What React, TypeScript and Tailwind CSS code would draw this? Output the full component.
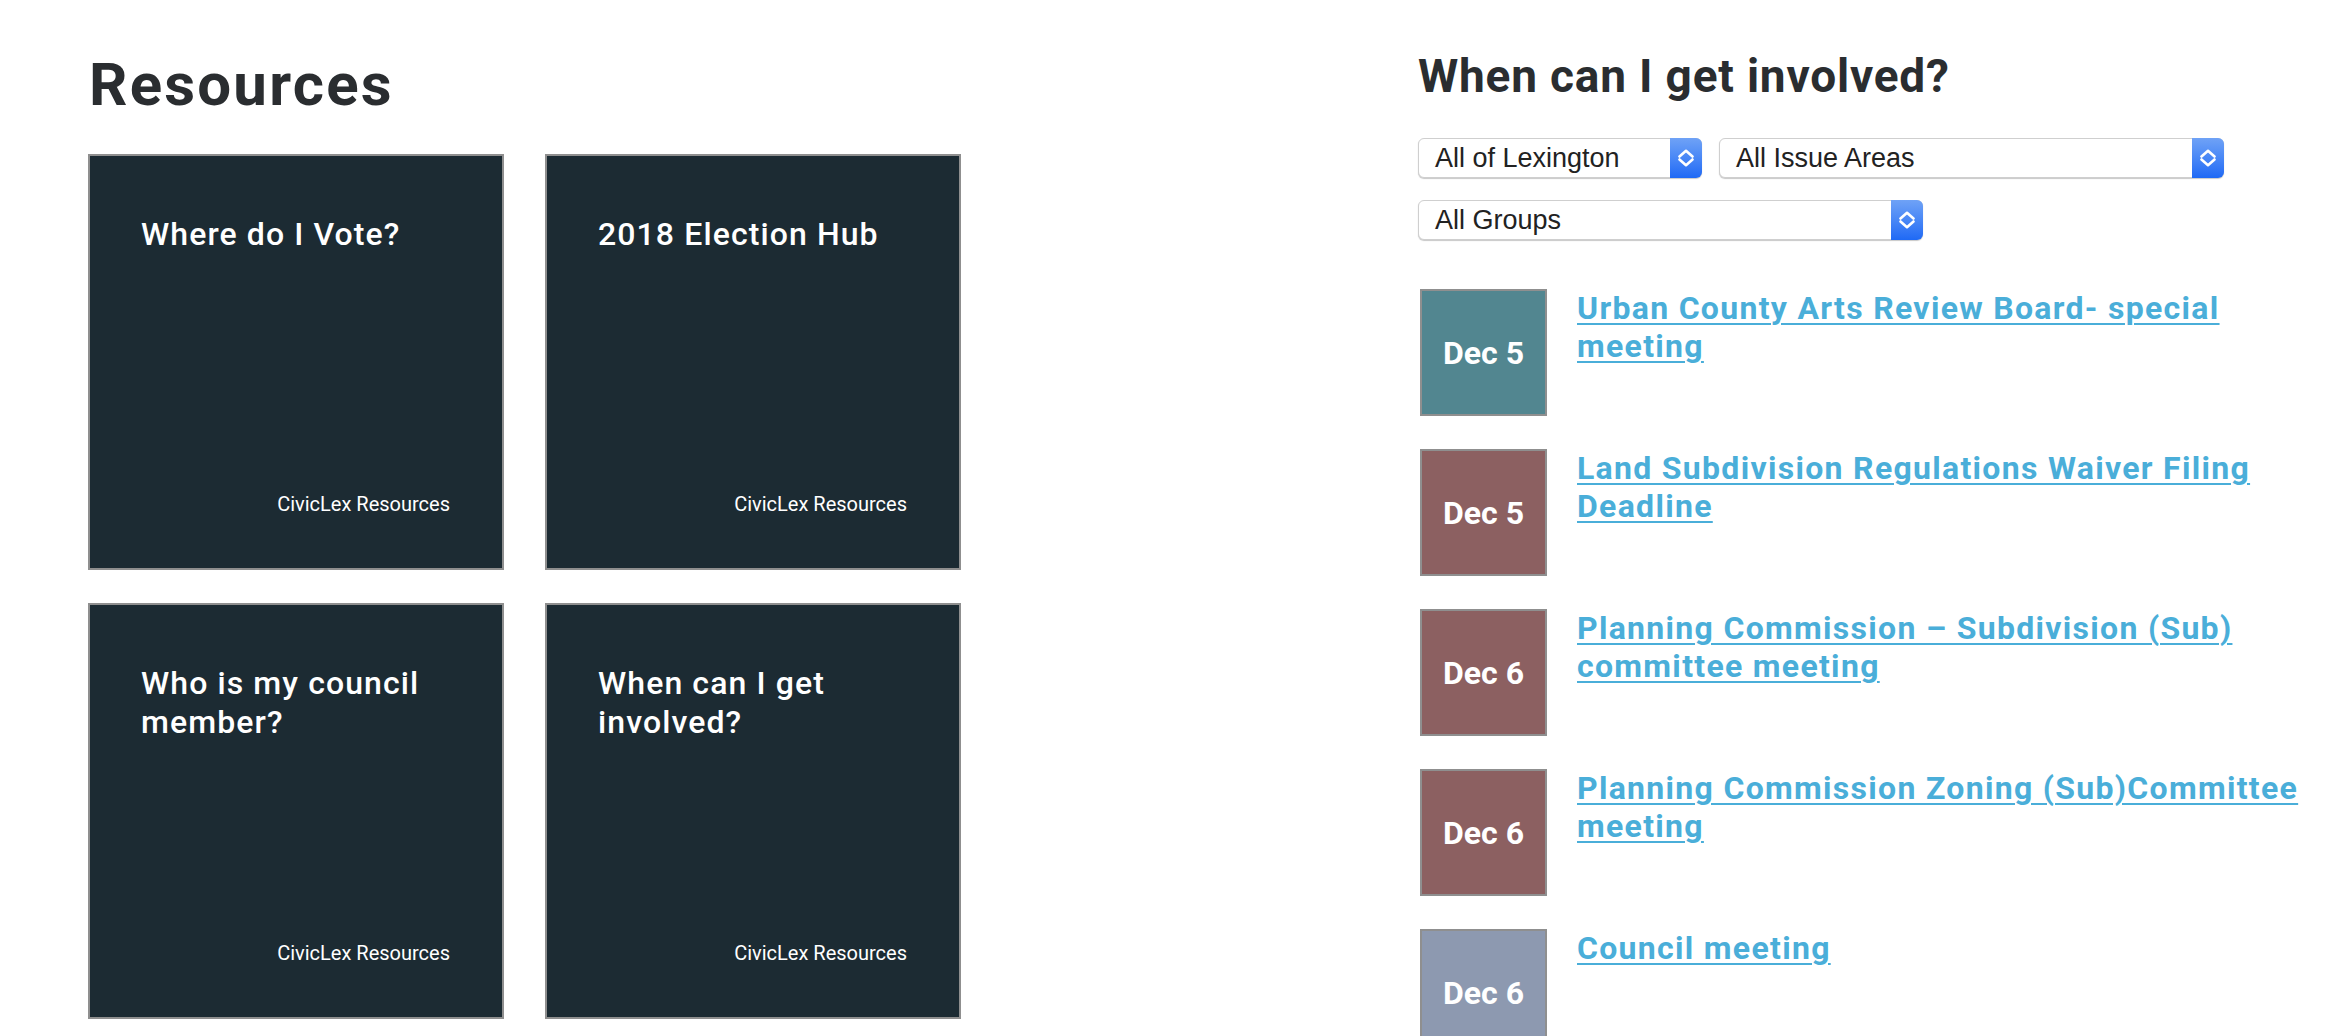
import React from "react";

const cards = [
  "Where do I Vote?",
  "2018 Election Hub",
  "Who is my council member?",
  "When can I get involved?",
];

const events = [
  { date: "Dec 5", color: "bg-[#528690]", title: "Urban County Arts Review Board- special meeting" },
  { date: "Dec 5", color: "bg-[#8c6061]", title: "Land Subdivision Regulations Waiver Filing Deadline" },
  { date: "Dec 6", color: "bg-[#8c6061]", title: "Planning Commission – Subdivision (Sub) committee meeting" },
  { date: "Dec 6", color: "bg-[#8c6061]", title: "Planning Commission Zoning (Sub)Committee meeting" },
  { date: "Dec 6", color: "bg-[#8d99b0]", title: "Council meeting" },
];

function Chevrons() {
  return (
    <svg width="16" height="18" viewBox="0 0 16 18" fill="none">
      <path d="M1.5 7.5 L8 1.8 L14.5 7.5" stroke="white" strokeWidth="2.6" strokeLinecap="round" strokeLinejoin="round" />
      <path d="M1.5 10.5 L8 16.2 L14.5 10.5" stroke="white" strokeWidth="2.6" strokeLinecap="round" strokeLinejoin="round" />
    </svg>
  );
}

function FakeSelect({ label, width }: { label: string; width: string }) {
  return (
    <div
      className={`${width} h-[40px] flex items-stretch rounded-[6px] border border-[#cfcfcf] bg-white shadow-[0_1px_1px_rgba(0,0,0,0.22)]`}
    >
      <div className="flex-1 flex items-center pl-[16px] text-[27px] text-[#222222] font-['Liberation_Sans',Arial,sans-serif] whitespace-nowrap overflow-hidden">
        {label}
      </div>
      <div className="w-[32px] -my-px -mr-px flex items-center justify-center rounded-r-[6px] bg-gradient-to-b from-[#6fa2f6] to-[#1e69f5]">
        <Chevrons />
      </div>
    </div>
  );
}

export default function App() {
  return (
    <div className="w-full h-[1036px] overflow-hidden bg-white flex font-['Roboto',sans-serif]">
      <div className="w-[1418px] shrink-0 pl-[88px]">
        <h1 className="mt-[49px] ml-[1px] text-[60px] leading-[72px] font-bold text-[#2a2d30] tracking-[2.2px]">Resources</h1>
        <div className="mt-[33px] grid grid-cols-[416px_416px] gap-x-[41px] gap-y-[33px]">
          {cards.map((c) => (
            <div
              key={c}
              className="w-[416px] h-[416px] border-2 border-[#8f8f8f] bg-[#1c2b33] flex flex-col justify-between pt-[59px] pb-[52px] pl-[51px] pr-[52px]"
            >
              <div className="text-white text-[32px] leading-[39px] font-medium tracking-[1.1px] pr-[10px]">{c}</div>
              <div className="text-white text-[20px] leading-[24px] text-right">CivicLex Resources</div>
            </div>
          ))}
        </div>
      </div>
      <div className="flex-1 min-w-0">
        <h2 className="mt-[49px] text-[46px] leading-[54px] font-bold text-[#2a2d30] tracking-[0.8px] whitespace-nowrap">
          When can I get involved?
        </h2>
        <div className="mt-[35px] flex gap-[17px]">
          <FakeSelect label="All of Lexington" width="w-[284px]" />
          <FakeSelect label="All Issue Areas" width="w-[505px]" />
        </div>
        <div className="mt-[22px] flex">
          <FakeSelect label="All Groups" width="w-[505px]" />
        </div>
        <div className="mt-[49px] ml-[2px] flex flex-col gap-[33px]">
          {events.map((e, i) => (
            <div key={i} className="flex items-start">
              <div
                className={`${e.color} w-[127px] h-[127px] shrink-0 border-2 border-[#8f8f8f] flex items-center justify-center text-white text-[32px] font-bold`}
              >
                {e.date}
              </div>
              <a
                href="#"
                className="ml-[30px] w-[752px] text-[32px] leading-[38px] font-bold text-[#4aaed9] tracking-[1.3px] underline decoration-2 underline-offset-[4px]"
              >
                {e.title}
              </a>
            </div>
          ))}
        </div>
      </div>
    </div>
  );
}
